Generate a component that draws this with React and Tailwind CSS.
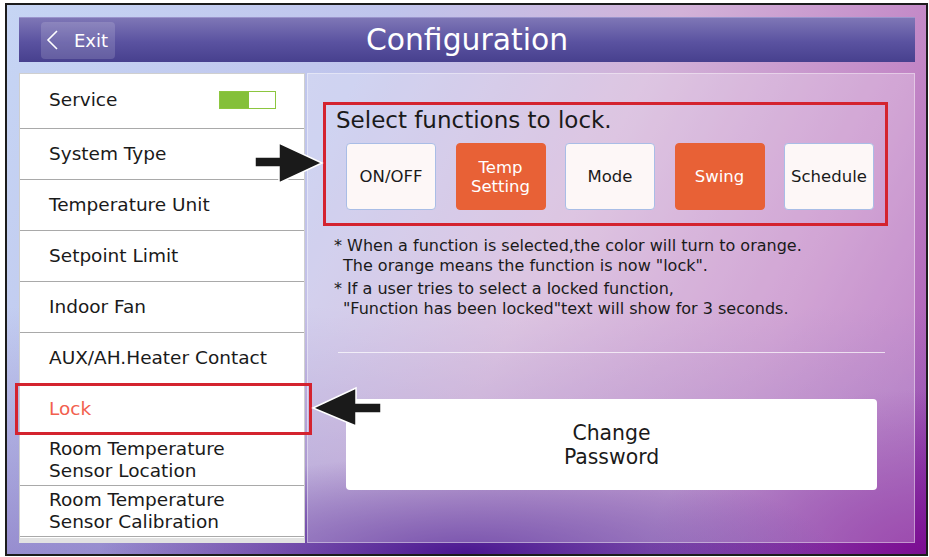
import React from "react";

const rows = [
  { label: "Service", toggle: true, h: "h-[55px]" },
  { label: "System Type" },
  { label: "Temperature Unit" },
  { label: "Setpoint Limit" },
  { label: "Indoor Fan" },
  { label: "AUX/AH.Heater Contact" },
  { label: "Lock", active: true },
  { label: "Room Temperature\nSensor Location" },
  { label: "Room Temperature\nSensor Calibration" },
];

const funcs = [
  { label: "ON/OFF", on: false },
  { label: "Temp\nSetting", on: true },
  { label: "Mode", on: false },
  { label: "Swing", on: true },
  { label: "Schedule", on: false },
];

export default function App() {
  return (
    <div
      className="relative w-[929px] h-[557px] bg-white pt-[3px] pl-[5px] overflow-hidden"
      style={{ fontFamily: '"DejaVu Sans", Verdana, sans-serif' }}
    >
      <div className="w-[923px] h-[553px] border-2 border-[#1c1c1c] flex flex-col pt-[12px] pl-[12px] bg-[radial-gradient(ellipse_40%_18%_at_50%_100%,#4a1690_0%,rgba(74,22,144,0)_100%),radial-gradient(ellipse_30%_30%_at_100%_100%,#7c0c92_0%,rgba(124,12,146,0)_100%),linear-gradient(to_bottom,rgba(100,70,170,0)_55%,rgba(100,70,170,0.45)_100%),linear-gradient(118deg,#c6d5f4_0%,#bfc4ec_32%,#d2b2d8_56%,#c286c6_78%,#a24eb2_100%)]">
        {/* Header */}
        <div className="w-[896px] h-[45px] flex items-center relative bg-[linear-gradient(to_bottom,#7e76b6,#5a52a0_55%,#47408e)] border-t border-[#9a94cc]">
          <div className="ml-[22px] w-[74px] h-[37px] rounded-[4px] bg-white/15 flex items-center text-white text-[18px]">
            <svg width="14" height="22" viewBox="0 0 14 22" className="ml-[4px]">
              <path d="M12 2 L3 11 L12 20" fill="none" stroke="white" strokeWidth="1.6" />
            </svg>
            <span className="ml-[15px]">Exit</span>
          </div>
          <div className="absolute left-0 right-0 top-0 h-full flex items-center justify-center pointer-events-none">
            <span className="text-white text-[29.8px] leading-none">Configuration</span>
          </div>
        </div>

        {/* Content */}
        <div className="mt-[11px] flex h-[470px] gap-[2px]">
          {/* Left list */}
          <div className="w-[286px] h-full bg-white border border-[#cfcfcf] border-b-[5px] border-b-[#e2e2e2] flex flex-col">
            {rows.map((r, i) => (
              <div
                key={i}
                className={`${r.h || "h-[51px]"} shrink-0 border-b border-[#a9a9a9] flex items-center justify-between pl-[29px] pr-[28px] text-[18.5px] leading-[22px] whitespace-pre ${
                  r.active ? "text-[#f2604e]" : "text-[#1a1a1a]"
                } ${i === 0 ? "pb-[2px]" : ""}`}
              >
                <span>{r.label}</span>
                {r.toggle && (
                  <div className="w-[57px] h-[18px] border border-[#8cc63f] flex">
                    <div className="w-[29px] h-full bg-[#84c03a]" />
                    <div className="flex-1 bg-white" />
                  </div>
                )}
              </div>
            ))}
          </div>

          {/* Right panel */}
          <div className="w-[608px] h-full bg-white/25 border border-white/40 flex flex-col">
            <div className="mt-[28px] ml-[15px] w-[565px] h-[124px] border-[3px] border-[#d4232f] flex flex-col">
              <div className="pl-[10px] pt-[2px] text-[23px] leading-[26px] text-[#1a1a1a]">Select functions to lock.</div>
              <div className="mt-[10px] ml-[20px] flex gap-[19.5px]">
                {funcs.map((f, i) => (
                  <div
                    key={i}
                    className={`w-[90px] h-[67px] rounded-[4px] flex items-center justify-center text-center whitespace-pre text-[16.5px] leading-[19px] ${
                      f.on
                        ? "bg-[#e86136] text-white border border-[#e86136]"
                        : "bg-[#fdf7f7] text-[#1a1a1a] border border-[#a9bde6]"
                    }`}
                  >
                    {f.label}
                  </div>
                ))}
              </div>
            </div>

            <div className="mt-[10px] ml-[26px] text-[16px] leading-[20px] text-[#1a1a1a] whitespace-pre">
              <div>{"* When a function is selected,the color will turn to orange."}</div>
              <div className="pl-[9px]">{'The orange means the function is now "lock".'}</div>
              <div className="mt-[3px]">{"* If a user tries to select a locked function,"}</div>
              <div className="pl-[9px]">{'"Function has been locked"text will show for 3 seconds.'}</div>
            </div>

            <div className="mt-[33px] ml-[30px] w-[547px] h-px bg-white/70" />

            <div className="mt-[46px] ml-[38px] w-[531px] h-[91px] bg-white rounded-[4px] flex items-center justify-center text-center text-[20.4px] leading-[24px] text-[#1a1a1a] whitespace-pre">
              {"Change\nPassword"}
            </div>
          </div>
        </div>
      </div>

      {/* Lock annotation box */}
      <div className="absolute left-[15px] top-[383px] w-[297px] h-[52px] border-[3px] border-[#d4232f]" />

      {/* Arrows */}
      <svg className="absolute left-0 top-0 pointer-events-none" width="929" height="557">
        <path
          d="M255 157 L279 157 L279 143 L322 163 L279 183 L279 167 L255 167 Z"
          fill="#1a1a1a"
          stroke="white"
          strokeWidth="1.5"
        />
        <path
          d="M313 408 L356 388 L356 403 L381 403 L381 413 L356 413 L356 426 Z"
          fill="#1a1a1a"
          stroke="white"
          strokeWidth="1.5"
        />
      </svg>
    </div>
  );
}
